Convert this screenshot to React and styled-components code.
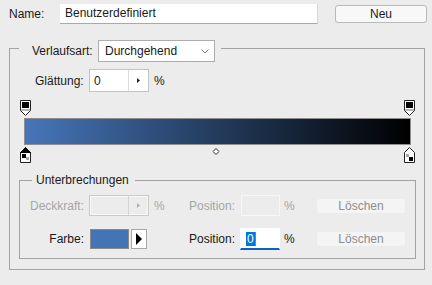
import React from "react";
import styled, { createGlobalStyle } from "styled-components";

const GlobalStyle = createGlobalStyle`
  body {
    margin: 0;
    background: #ececec;
    font-family: "Liberation Sans", Arial, sans-serif;
    font-size: 12px;
    color: #1a1a1a;
  }
`;

const Page = styled.div`
  width: 432px;
  height: 285px;
  box-sizing: border-box;
  padding-top: 4px;
`;

const Header = styled.div`
  display: flex;
  align-items: center;
  height: 20px;
  padding-left: 9px;
`;

const Label = styled.span`
  display: inline-block;
  width: ${(props) => props.width || "auto"};
  text-align: ${(props) => (props.right ? "right" : "left")};
  padding-right: ${(props) => (props.right ? "5px" : "0")};
  box-sizing: border-box;
  color: ${(props) => (props.disabled ? "#a6a6a6" : "#1a1a1a")};
  white-space: nowrap;
`;

const NameInput = styled.div`
  width: 258px;
  height: 20px;
  box-sizing: border-box;
  background: #fff;
  border-bottom: 1px solid #a9a9a9;
  border-right: 1px solid #d6d6d6;
  padding-left: 5px;
  line-height: 19px;
`;

const Button = styled.div`
  width: ${(props) => props.width || "90px"};
  height: ${(props) => props.height || "16px"};
  margin-left: ${(props) => props.offset || "0"};
  box-sizing: border-box;
  border: 1px solid ${(props) => (props.disabled ? "#ebebeb" : "#b9b9b9")};
  border-radius: 3px;
  background: ${(props) => (props.disabled ? "#f4f4f4" : "#f8f8f8")};
  color: ${(props) => (props.disabled ? "#8d8d8d" : "#1a1a1a")};
  display: flex;
  align-items: center;
  justify-content: center;
`;

const OuterGroup = styled.div`
  margin: 24px 0 0 9px;
  width: 416px;
  box-sizing: border-box;
  border: 1px solid #a3a3a3;
  padding-bottom: 10px;
`;

const Legend = styled.div`
  display: flex;
  align-items: center;
  width: fit-content;
  background: #ececec;
  margin: ${(props) => props.margin};
  padding: ${(props) => props.pad};
  height: ${(props) => props.h};
`;

const Select = styled.div`
  width: 117px;
  height: 22px;
  box-sizing: border-box;
  background: #fff;
  border: 1px solid #adadad;
  display: flex;
  align-items: center;
  justify-content: space-between;
  padding: 0 5px 0 6px;
`;

const Row = styled.div`
  display: flex;
  align-items: center;
  margin: ${(props) => props.margin || "0"};
`;

const Spin = styled.div`
  width: 60px;
  height: ${(props) => props.h || "23px"};
  box-sizing: border-box;
  display: flex;
  background: ${(props) => (props.disabled ? "#ececec" : "#fff")};
  border: 1px solid ${(props) => (props.disabled ? "#c9c9c9" : "#c3c3c3")};
  box-shadow: ${(props) => (props.disabled ? "inset 0 0 0 1px #f9f9f9" : "none")};
`;

const SpinValue = styled.div`
  flex: 1;
  padding-left: 4px;
  display: flex;
  align-items: center;
  border-right: 1px solid ${(props) => (props.disabled ? "#d4d4d4" : "#dcdcdc")};
`;

const SpinArrow = styled.div`
  width: 19px;
  display: flex;
  align-items: center;
  justify-content: center;
`;

const Percent = styled.span`
  display: inline-block;
  width: ${(props) => props.width || "auto"};
  padding-left: ${(props) => props.pad || "5px"};
  box-sizing: border-box;
  color: ${(props) => (props.disabled ? "#a6a6a6" : "#1a1a1a")};
`;

const GradientArea = styled.div`
  margin-top: 8px;
  display: flex;
  flex-direction: column;
`;

const StopTrack = styled.div`
  position: relative;
  margin-left: 10px;
  width: 384px;
  height: ${(props) => props.h};
  margin-top: ${(props) => props.top || "0"};
`;

const Stop = styled.div`
  position: absolute;
  top: 0;
  width: 11px;
  height: 16px;
  line-height: 0;
`;

const Diamond = styled.div`
  position: absolute;
  top: 1px;
  transform: translateX(-50%);
  line-height: 0;
`;

const Bar = styled.div`
  margin: 3px 0 0 14px;
  width: 387px;
  height: 27px;
  box-sizing: border-box;
  border: 1px solid #8e8e8e;
  background: linear-gradient(to right, #4676b9, #000);
`;

const InnerGroup = styled.div`
  margin: 16px 0 0 9px;
  width: 397px;
  box-sizing: border-box;
  border: 1px solid #a3a3a3;
  padding-bottom: 8px;
`;

const StopGrid = styled.div`
  display: grid;
  grid-template-columns: 69px 60px 40px 51px 40px 36px 90px;
  row-gap: 12px;
  align-items: center;
  margin-top: 7px;
`;

const PosInput = styled.div`
  width: ${(props) => (props.disabled ? "39px" : "40px")};
  height: ${(props) => (props.disabled ? "21px" : "22px")};
  margin-left: ${(props) => (props.disabled ? "1px" : "0")};
  box-sizing: border-box;
  background: ${(props) => (props.disabled ? "#ececec" : "#fff")};
  border: 1px solid ${(props) => (props.disabled ? "#f7f7f7" : "#fff")};
  border-bottom: ${(props) => (props.disabled ? "1px solid #f7f7f7" : "2px solid #0a62c4")};
  display: flex;
  align-items: center;
  padding-left: 5px;
`;

const Selected = styled.span`
  background: #0078d7;
  color: #fff;
  line-height: 14px;
  padding: 0 1px;
  border-right: 1px solid #d06a1a;
`;

const Swatches = styled.div`
  display: flex;
  align-items: center;
  gap: 2px;
  margin-left: 1px;
`;

const Swatch = styled.div`
  width: 39px;
  height: 20px;
  box-sizing: border-box;
  border: 1px solid #8a8a8a;
  background: ${(props) => props.color};
`;

const ArrowBtn = styled.div`
  width: 16px;
  height: 20px;
  box-sizing: border-box;
  border: 1px solid #a8a8a8;
  background: #fff;
  display: flex;
  align-items: center;
  justify-content: center;
`;

const TopStopIcon = () => (
  <svg width="11" height="16" viewBox="0 0 11 16">
    <path d="M0.5 0.5H10.5V10.5L5.5 15.5L0.5 10.5Z" fill="#fff" stroke="#222" />
    <rect x="2" y="2" width="7" height="6" fill="#000" />
    <rect x="1" y="9" width="9" height="2" fill="#b5b5b5" />
  </svg>
);

const BottomStopIcon = ({ active, flip }) => (
  <svg width="11" height="16" viewBox="0 0 11 16">
    <path d="M5.5 0.5L10.5 5.5V15.5H0.5V5.5Z" fill="#fff" stroke="#222" />
    {active && <path d="M5.5 0.5L10.5 5.5H0.5Z" fill="#000" stroke="#000" />}
    <rect x="2" y="7" width="7" height="7" fill="#fff" />
    <rect x={flip ? 5 : 2} y={flip ? 10 : 7} width="4" height="4" fill="#000" />
    <rect x={flip ? 2 : 6} y={flip ? 7 : 10} width="3" height="3" fill="#a8a8a8" />
  </svg>
);

const Tri = ({ color }) => (
  <svg width="3" height="5" viewBox="0 0 3 5">
    <path d="M0 0L3 2.5L0 5Z" fill={color} />
  </svg>
);

const stops = [0, 100];

export default function App() {
  return (
    <>
      <GlobalStyle />
      <Page>
        <Header>
          <Label width="51px">Name:</Label>
          <NameInput>Benutzerdefiniert</NameInput>
          <Button width="92px" height="18px" offset="17px">
            Neu
          </Button>
        </Header>

        <OuterGroup>
          <Legend margin="-9px 0 0 9px" pad="0 6px 0 13px" h="22px">
            <Label width="66px">Verlaufsart:</Label>
            <Select>
              <span>Durchgehend</span>
              <svg width="8" height="5" viewBox="0 0 8 5">
                <path d="M0.5 0.5L4 4L7.5 0.5" fill="none" stroke="#777" />
              </svg>
            </Select>
          </Legend>

          <Row margin="7px 0 0 25px">
            <Label width="54px">Glättung:</Label>
            <Spin>
              <SpinValue>0</SpinValue>
              <SpinArrow>
                <Tri color="#222" />
              </SpinArrow>
            </Spin>
            <Percent>%</Percent>
          </Row>

          <GradientArea>
            <StopTrack h="15px">
              {stops.map((p) => (
                <Stop key={p} style={{ left: `${p}%` }}>
                  <TopStopIcon />
                </Stop>
              ))}
            </StopTrack>
            <Bar />
            <StopTrack h="17px" top="2px">
              <Diamond style={{ left: "51%" }}>
                <svg width="7" height="7" viewBox="0 0 7 7">
                  <path d="M3.5 0.5L6.5 3.5L3.5 6.5L0.5 3.5Z" fill="#fff" stroke="#222" />
                </svg>
              </Diamond>
              {stops.map((p) => (
                <Stop key={p} style={{ left: `${p}%` }}>
                  <BottomStopIcon active={p === 0} flip={p === 100} />
                </Stop>
              ))}
            </StopTrack>
          </GradientArea>

          <InnerGroup>
            <Legend margin="-9px 0 0 12px" pad="0 6px 0 4px" h="16px">
              Unterbrechungen
            </Legend>
            <StopGrid>
              <Label right disabled>
                Deckkraft:
              </Label>
              <Spin disabled h="21px">
                <SpinValue disabled />
                <SpinArrow>
                  <Tri color="#b0b0b0" />
                </SpinArrow>
              </Spin>
              <Percent disabled>%</Percent>
              <Label disabled>Position:</Label>
              <PosInput disabled />
              <Percent disabled pad="4px">
                %
              </Percent>
              <Button disabled>Löschen</Button>

              <Label right>Farbe:</Label>
              <Swatches>
                <Swatch color="#4274b6" />
                <ArrowBtn>
                  <svg width="6" height="12" viewBox="0 0 6 12">
                    <path d="M0 0L6 6L0 12Z" fill="#000" />
                  </svg>
                </ArrowBtn>
              </Swatches>
              <span />
              <Label>Position:</Label>
              <PosInput>
                <Selected>0</Selected>
              </PosInput>
              <Percent pad="4px">%</Percent>
              <Button disabled>Löschen</Button>
            </StopGrid>
          </InnerGroup>
        </OuterGroup>
      </Page>
    </>
  );
}
